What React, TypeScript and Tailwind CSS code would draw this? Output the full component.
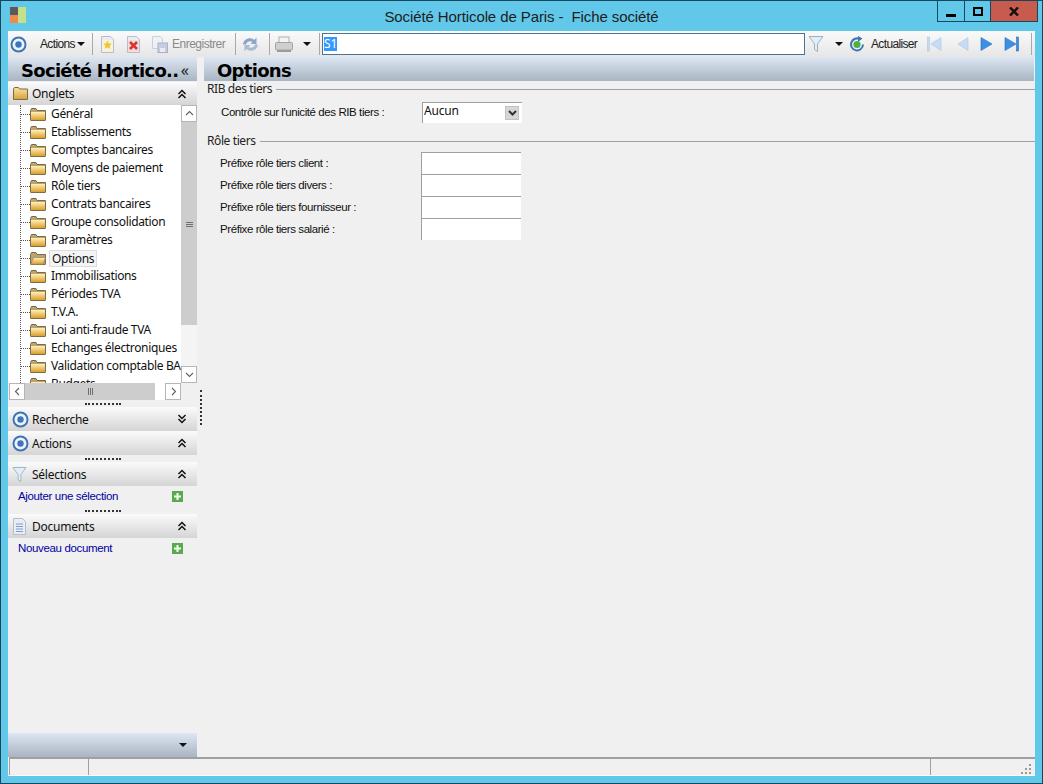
import React from "react";

const GRAD_HEAD = "bg-gradient-to-b from-[#dde7f3] to-[#a9b5c2]";
const GRAD_PANEL = "bg-gradient-to-b from-[#fbfbfb] to-[#d5d5d5]";

function Target({ size = 17 }: { size?: number }) {
  return (
    <svg width={size} height={size} viewBox="0 0 17 17">
      <circle cx="8.5" cy="8.5" r="7" fill="#eef3fa" stroke="#3f74b8" strokeWidth="2" />
      <circle cx="8.5" cy="8.5" r="3.2" fill="#3f74b8" />
    </svg>
  );
}
function Funnel({ w = 16, h = 18 }: { w?: number; h?: number }) {
  return (
    <svg width={w} height={h} viewBox="0 0 16 18">
      <path d="M1 1.500h14L9.500 9v7.500l-3-2V9z" fill="#e3edf6" stroke="#9db2c6" strokeWidth="1" />
    </svg>
  );
}
function Folder({ open }: { open?: boolean }) {
  return (
    <svg width="16" height="13" viewBox="0 0 16 13" className="shrink-0">
      <defs>
        <linearGradient id="fg" x1="0" y1="0" x2="0" y2="1">
          <stop offset="0" stopColor="#fff0b8" />
          <stop offset="1" stopColor="#dc9f2c" />
        </linearGradient>
      </defs>
      <path d="M.5 2.500V12a.5.5 0 0 0 .5.5h14a.5.5 0 0 0 .5-.5V2.500H7L6 .5H1.500z" fill="#b9a473" stroke="#7d6b42" />
      {open ? (
        <path d="M.8 12.300 3.500 5.500h12l-2.400 6.800z" fill="url(#fg)" stroke="#9a8350" strokeWidth=".7" />
      ) : (
        <rect x="1" y="4" width="14" height="8" fill="url(#fg)" />
      )}
    </svg>
  );
}
function ChevUp() {
  return (
    <svg width="10" height="10" viewBox="0 0 10 10" fill="none" stroke="#111" strokeWidth="1.5">
      <path d="M1.500 5 5 1.500 8.500 5M1.500 9 5 5.500 8.500 9" />
    </svg>
  );
}
function ChevDown() {
  return (
    <svg width="10" height="10" viewBox="0 0 10 10" fill="none" stroke="#111" strokeWidth="1.5">
      <path d="M1.500 1 5 4.500 8.500 1M1.500 5 5 8.500 8.500 5" />
    </svg>
  );
}
function Caret() {
  return (
    <svg width="8" height="4" viewBox="0 0 8 4">
      <path d="M0 0h8L4 4z" fill="#111" />
    </svg>
  );
}
function Plus() {
  return (
    <svg width="11" height="11" viewBox="0 0 11 11">
      <rect width="11" height="11" fill="#5aa84f" />
      <path d="M4.500 2h2v2.500H9v2H6.500V9h-2V6.500H2v-2h2.500z" fill="#f4fff0" />
    </svg>
  );
}
function Doc({ children }: { children?: React.ReactNode }) {
  return (
    <svg width="15" height="17" viewBox="0 0 15 17">
      <path d="M1.500.5h9l3 3v13h-12z" fill="#e9edf3" stroke="#b4bed0" />
      {children}
    </svg>
  );
}
function Sep({ ml }: { ml: string }) {
  return <div className={`w-px h-[22px] bg-[#a9a9a9] ${ml}`} />;
}
function Nav({ dir, bar, color, edge }: { dir: "l" | "r"; bar?: boolean; color: string; edge: string }) {
  return (
    <svg width="15" height="16" viewBox="0 0 15 16">
      {dir === "l" ? (
        <>
          {bar && <rect x="0.500" y="1" width="2" height="14" fill={color} stroke={edge} strokeWidth=".6" />}
          <path d="M14 1.500v13L4 8z" fill={color} stroke={edge} strokeWidth=".6" />
        </>
      ) : (
        <>
          {bar && <rect x="12.500" y="1" width="2" height="14" fill={color} stroke={edge} strokeWidth=".6" />}
          <path d="M1 1.500v13L12 8z" fill={color} stroke={edge} strokeWidth=".6" />
        </>
      )}
    </svg>
  );
}

function Toolbar() {
  return (
    <div className="h-[26px] flex items-center bg-gradient-to-b from-[#fafafa] to-[#e6e6e6] text-[12px] text-[#222] tracking-[-0.65px] font-['Liberation_Sans',sans-serif]">
      <div className="ml-[2px]"><Target /></div>
      <span className="ml-[13px] w-[36px]">Actions</span>
      <div className="ml-[1px]"><Caret /></div>
      <Sep ml="ml-[7px]" />
      <div className="ml-[7px]">
        <Doc>
          <rect x="2" y="4" width="11" height="12" fill="#f6f3d8" />
          <path d="M7.500 4.500l1.300 2.900 3 .3-2.200 2 .6 3-2.700-1.500-2.700 1.500.6-3-2.200-2 3-.3z" fill="#f0c52e" />
        </Doc>
      </div>
      <div className="ml-[11px]">
        <Doc>
          <rect x="2" y="4" width="11" height="12" fill="#f3dcdc" />
          <path d="M4 6l7 7M11 6l-7 7" stroke="#d6362f" strokeWidth="2.600" />
        </Doc>
      </div>
      <div className="ml-[11px] opacity-70">
        <svg width="16" height="17" viewBox="0 0 16 17">
          <path d="M.5.5h8l2 2v10H.5z" fill="#eef1f6" stroke="#b9c3d2" />
          <rect x="6" y="7" width="9.500" height="9.500" fill="#b5c0dc" stroke="#8c98b8" />
          <rect x="8" y="12" width="5" height="4" fill="#e8ecf4" />
        </svg>
      </div>
      <span className="ml-[4px] w-[54px] text-[#8a8a8a] whitespace-nowrap tracking-[-0.5px]">Enregistrer</span>
      <Sep ml="ml-[9px]" />
      <div className="ml-[6px]">
        <svg width="17" height="17" viewBox="0 0 17 17">
          <path d="M1 8.500C1.500 4 5.500 1.500 9.500 2.500c1.200.3 2 .8 2.800 1.500L14.500 1.500V8H8.500l2-2C8 4.500 5 5.500 4 8.500z" fill="#8aa5c6" />
          <path d="M16 8.500c-.5 4.500-4.500 7-8.500 6-1.200-.3-2-.8-2.800-1.500L2.500 15.500V9h6l-2 2c2.500 1.500 5.500.5 6.500-2.500z" fill="#a7bdd6" />
        </svg>
      </div>
      <Sep ml="ml-[10px]" />
      <div className="ml-[5px]">
        <svg width="18" height="17" viewBox="0 0 18 17">
          <rect x="4" y="1" width="10" height="6" fill="#f4f4f4" stroke="#aeaeae" />
          <rect x=".5" y="6.500" width="17" height="7.500" rx="1" fill="#cfcfcf" stroke="#a4a4a4" />
          <rect x="2" y="14" width="14" height="2" fill="#9c9c9c" />
        </svg>
      </div>
      <div className="ml-[10px]"><Caret /></div>
      <Sep ml="ml-[8px]" />
      <div className="ml-[2px] w-[483px] h-[22px] bg-white border border-[#4a7396] flex items-center px-px">
        <span className="bg-[#3399ff] text-white leading-[14px] h-[14px] font-['Noto_Sans',sans-serif] text-[12px] tracking-normal">S1</span>
      </div>
      <div className="ml-[3px]"><Funnel /></div>
      <div className="ml-[11px]"><Caret /></div>
      <div className="ml-[6px]">
        <svg width="16" height="17" viewBox="0 0 16 17">
          <path d="M11.500 2.300A7 7 0 1 0 15 8.500h-2A5 5 0 1 1 9 3.600V6l4.500-3.500L9 0v1.600z" fill="#3f74b8" />
          <circle cx="8" cy="8.500" r="3.600" fill="#4fb043" />
        </svg>
      </div>
      <span className="ml-[6px] w-[46px] whitespace-nowrap">Actualiser</span>
      <div className="ml-[10px]"><Nav dir="l" bar color="#c7dcf2" edge="#a9c6e4" /></div>
      <div className="ml-[12px]"><Nav dir="l" color="#c7dcf2" edge="#a9c6e4" /></div>
      <div className="ml-[11px]"><Nav dir="r" color="#3d8fe6" edge="#2a6fc0" /></div>
      <div className="ml-[9px]"><Nav dir="r" bar color="#3d8fe6" edge="#2a6fc0" /></div>
      <Sep ml="ml-[12px]" />
    </div>
  );
}

const TREE = [
  "Général",
  "Etablissements",
  "Comptes bancaires",
  "Moyens de paiement",
  "Rôle tiers",
  "Contrats bancaires",
  "Groupe consolidation",
  "Paramètres",
  "Options",
  "Immobilisations",
  "Périodes TVA",
  "T.V.A.",
  "Loi anti-fraude TVA",
  "Echanges électroniques",
  "Validation comptable BA",
  "Budgets",
];

function Grip() {
  return (
    <div className="flex justify-center items-center h-full">
      <div className="w-[36px] border-t-2 border-dotted border-[#333]" />
    </div>
  );
}

function ScrollBtn({ children, cls }: { children: React.ReactNode; cls: string }) {
  return (
    <div className={`bg-white border border-[#b5b5b5] flex items-center justify-center shrink-0 ${cls}`}>
      {children}
    </div>
  );
}
function Arrow({ d }: { d: string }) {
  return (
    <svg width="9" height="9" viewBox="0 0 9 9" fill="none" stroke="#606060" strokeWidth="1.100">
      <path d={d} />
    </svg>
  );
}

function Tree() {
  return (
    <div className="h-[295px] flex flex-col text-[12px] text-[#111] tracking-[-0.35px]">
      <div className="h-[278px] flex bg-white">
        <div className="w-[173px] overflow-hidden relative">
          <div className="absolute left-[12px] top-0 h-full border-l border-dotted border-[#555]" />
          {TREE.map((t) => (
            <div key={t} className="h-[18px] flex items-center pl-[13px] relative whitespace-nowrap">
              <div className="w-[9px] shrink-0 border-t border-dotted border-[#555]" />
              <Folder open={t === "Options"} />
              <span
                className={
                  t === "Options"
                    ? "ml-[3px] px-[2px] h-[17px] leading-[15px] bg-[#f4f4f4] border border-[#dcdcdc] shrink-0"
                    : "ml-[5px] shrink-0"
                }
              >
                {t}
              </span>
            </div>
          ))}
        </div>
        <div className="w-[16px] flex flex-col bg-[#f4f4f4]">
          <ScrollBtn cls="h-[17px]"><Arrow d="M1 6l3.500-3.500L8 6" /></ScrollBtn>
          <div className="h-[203px] bg-[#cdcdcd] flex flex-col items-center justify-center gap-[1px] pt-[1px]">
            <div className="w-[7px] h-px bg-[#6f6f6f]" />
            <div className="w-[7px] h-px bg-[#6f6f6f]" />
            <div className="w-[7px] h-px bg-[#6f6f6f]" />
          </div>
          <div className="flex-1 bg-[#f4f4f4]" />
          <ScrollBtn cls="h-[17px]"><Arrow d="M1 3l3.500 3.500L8 3" /></ScrollBtn>
        </div>
      </div>
      <div className="h-[17px] flex pl-px">
        <div className="w-[172px] flex bg-[#f4f4f4]">
          <ScrollBtn cls="w-[16px]"><Arrow d="M6 1 2.500 4.500 6 8" /></ScrollBtn>
          <div className="w-[130px] bg-[#cdcdcd] flex items-center justify-center gap-[1px]">
            <div className="w-px h-[7px] bg-[#6f6f6f]" />
            <div className="w-px h-[7px] bg-[#6f6f6f]" />
            <div className="w-px h-[7px] bg-[#6f6f6f]" />
          </div>
          <div className="flex-1 bg-white" />
          <ScrollBtn cls="w-[16px]"><Arrow d="M3 1l3.500 3.500L3 8" /></ScrollBtn>
        </div>
      </div>
    </div>
  );
}

function PanelHead({ icon, label, up }: { icon: React.ReactNode; label: string; up?: boolean }) {
  return (
    <div className={`h-[24px] flex items-center ${GRAD_PANEL} text-[12px] tracking-[-0.25px] text-[#111]`}>
      <div className="w-[24px] pl-[4px] flex items-center justify-start shrink-0">{icon}</div>
      <span className="flex-1 pt-px">{label}</span>
      <div className="w-[20px] shrink-0">{up ? <ChevUp /> : <ChevDown />}</div>
    </div>
  );
}

function LinkRow({ label }: { label: string }) {
  return (
    <div className="h-[21px] flex items-center pl-[10px] pr-[14px] justify-between text-[11.500px] text-[#0000a0] tracking-[-0.35px] font-['Liberation_Sans',sans-serif]">
      <span className="pt-px">{label}</span>
      <Plus />
    </div>
  );
}

function Sidebar() {
  return (
    <div className="w-[189px] shrink-0 flex flex-col">
      <div className={`h-[24px] flex items-center justify-between ${GRAD_HEAD} pl-[13px] pr-[8px] pt-[2px]`}>
        <span className="font-['DejaVu_Sans',sans-serif] font-bold text-[18px] text-black whitespace-nowrap tracking-[-0.7px]">Société Hortico..</span>
        <span className="text-[16px] leading-[18px] text-[#222]">«</span>
      </div>
      <div className="h-px" />
      <div className="h-[23px] flex items-center bg-gradient-to-b from-[#fbfbfb] to-[#d5d5d5] text-[12px] tracking-[-0.25px] text-[#111]">
        <div className="w-[24px] pl-[5px] shrink-0">
          <svg width="15" height="13" viewBox="0 0 15 13">
            <defs>
              <linearGradient id="og" x1="0" y1="0" x2="0" y2="1">
                <stop offset="0" stopColor="#f8e3a4" />
                <stop offset="1" stopColor="#d7a13a" />
              </linearGradient>
            </defs>
            <path d="M.5 2V12.500h14V2H6.500L5.500.5h-4z" fill="url(#og)" stroke="#7d6b42" />
          </svg>
        </div>
        <span className="flex-1">Onglets</span>
        <div className="w-[20px] shrink-0"><ChevUp /></div>
      </div>
      <Tree />
      <div className="h-[7px]"><Grip /></div>
      <PanelHead icon={<Target />} label="Recherche" />
      <PanelHead icon={<Target />} label="Actions" up />
      <div className="h-[7px]"><Grip /></div>
      <PanelHead icon={<Funnel w={15} h={17} />} label="Sélections" up />
      <LinkRow label="Ajouter une sélection" />
      <div className="h-[7px]"><Grip /></div>
      <PanelHead
        icon={
          <Doc>
            <path d="M4 6h7M4 8.500h7M4 11h7M4 13.500h7" stroke="#7f9bd0" />
          </Doc>
        }
        label="Documents"
        up
      />
      <LinkRow label="Nouveau document" />
      <div className="flex-1" />
      <div className={`h-[24px] flex items-center justify-end pr-[10px] ${GRAD_HEAD}`}><Caret /></div>
    </div>
  );
}

function GroupTitle({ label }: { label: string }) {
  return (
    <div className="flex items-center h-[14px] text-[12px] text-[#222] font-['Noto_Sans',sans-serif] tracking-[-0.4px]">
      <span>{label}</span>
      <div className="flex-1 h-px bg-[#a0a0a0] ml-[4px]" />
    </div>
  );
}

function Field({ label }: { label: string }) {
  return (
    <div className="h-[22px] flex items-center">
      <span className="w-[215px] pl-[14px] pt-px text-[#111]">{label}</span>
      <div className="w-[100px] h-[22px] bg-white border-t border-l border-[#a0a0a0]" />
    </div>
  );
}

function Main() {
  return (
    <div className="flex-1 flex flex-col min-w-0">
      <div className={`h-[24px] flex items-center ${GRAD_HEAD} pl-[13px] mr-px pt-[2px]`}>
        <span className="font-['DejaVu_Sans',sans-serif] font-bold text-[18px] text-black tracking-[-0.7px]">Options</span>
      </div>
      <div className="pl-[3px] pt-px text-[11.500px] font-['Liberation_Sans',sans-serif] tracking-[-0.42px]">
        <GroupTitle label="RIB des tiers" />
        <div className="h-[21px] mt-[6px] flex items-center">
          <span className="w-[215px] pl-[14px] pt-px text-[#111]">Contrôle sur l'unicité des RIB tiers :</span>
          <div className="w-[100px] h-[21px] bg-white border-t border-l border-[#a0a0a0] flex items-start justify-between pr-[3px]">
            <span className="pl-px text-[12px] text-[#111] leading-[15px] font-['Noto_Sans',sans-serif] tracking-[-0.2px]">Aucun</span>
            <div className="w-[14px] h-[14px] mt-[3px] bg-[#d6d6d6] border border-[#c2c2c2] flex items-center justify-center">
              <svg width="9" height="6" viewBox="0 0 9 6" fill="none" stroke="#333" strokeWidth="2">
                <path d="M1 1l3.500 3.500L8 1" />
              </svg>
            </div>
          </div>
        </div>
        <div className="mt-[11px]"><GroupTitle label="Rôle tiers" /></div>
        <div className="mt-[4px] -ml-px">
          <Field label="Préfixe rôle tiers client :" />
          <Field label="Préfixe rôle tiers divers :" />
          <Field label="Préfixe rôle tiers fournisseur :" />
          <Field label="Préfixe rôle tiers salarié :" />
        </div>
      </div>
    </div>
  );
}

export default function App() {
  return (
    <div className="w-[1043px] h-[784px] bg-[#62c8ea] border border-[#17475c] flex flex-col font-['Noto_Sans',sans-serif] overflow-hidden">
      <div className="h-[30px] shrink-0 grid grid-cols-[1fr_auto_1fr] items-start">
        <div className="pl-[9px] pt-[6px]">
          <div className="w-[16px] h-[16px] grid grid-cols-2 grid-rows-2">
            <div className="bg-[#5a5a5a]" />
            <div className="bg-[#c6e08a] row-span-2" />
            <div className="bg-[#ef8a4c]" />
          </div>
        </div>
        <div className="pt-[6px] text-[15px] tracking-[-0.1px] leading-[19px] text-[#1d1d1d] whitespace-pre font-['Liberation_Sans',sans-serif]">
          Société Horticole de Paris -  Fiche société
        </div>
        <div className="flex justify-end pr-[4px]">
          <div className="flex h-[21px] border-b border-l border-r border-[#17475c]">
            <div className="w-[27px] flex items-end justify-center pb-[4px] border-r border-[#17475c]">
              <div className="w-[10px] h-[3px] bg-black" />
            </div>
            <div className="w-[26px] flex items-center justify-center border-r border-[#17475c]">
              <div className="w-[10px] h-[9px] border-2 border-black" />
            </div>
            <div className="w-[46px] bg-[#c75b4d] flex items-center justify-center">
              <svg width="10" height="9" viewBox="0 0 10 9" stroke="#111" strokeWidth="2.400">
                <path d="M1 .5l8 8M9 .5l-8 8" />
              </svg>
            </div>
          </div>
        </div>
      </div>
      <div className="mx-[7px] mb-[7px] flex-1 flex flex-col bg-[#f0f0f0] min-h-0">
        <Toolbar />
        <div className="flex-1 flex min-h-0">
          <Sidebar />
          <div className="w-[7px] shrink-0 flex flex-col items-center pt-[333px]">
            <div className="h-[35px] border-l-2 border-dotted border-[#333]" />
          </div>
          <Main />
        </div>
        <div className="h-[19px] shrink-0 flex border-t-2 border-[#a0a0a0] border-b border-b-white ml-px">
          <div className="w-[79px] border-l border-[#a0a0a0]" />
          <div className="flex-1 border-l border-[#a0a0a0]" />
          <div className="w-[105px] border-l border-[#a0a0a0] flex items-end justify-end pr-[4px] pb-[1px]">
            <svg width="10" height="10" viewBox="0 0 10 10" fill="#9a9a9a">
              <rect x="8" y="0" width="2" height="2" />
              <rect x="4" y="4" width="2" height="2" />
              <rect x="8" y="4" width="2" height="2" />
              <rect x="0" y="8" width="2" height="2" />
              <rect x="4" y="8" width="2" height="2" />
              <rect x="8" y="8" width="2" height="2" />
            </svg>
          </div>
        </div>
      </div>
    </div>
  );
}
